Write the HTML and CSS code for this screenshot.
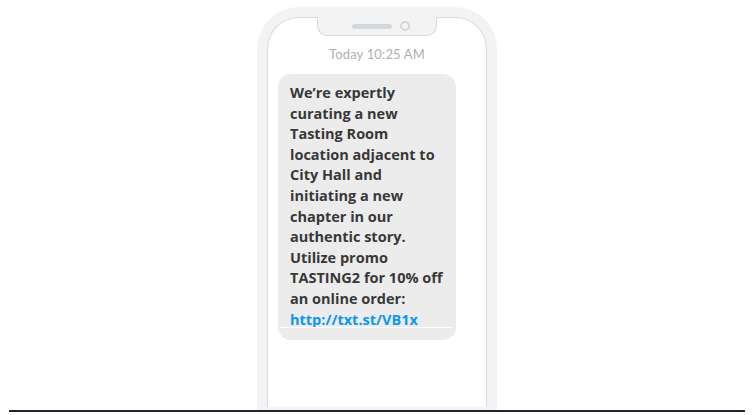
FILE: index.html
```html
<!DOCTYPE html>
<html>
<head>
<meta charset="utf-8">
<link rel="stylesheet" href="styles.css">
</head>
<body>
<div class="stage">
  <div class="phone">
    <div class="screen">
      <div class="notch">
        <span class="speaker"></span>
        <span class="camera"></span>
      </div>
      <div class="time">Today 10:25 AM</div>
      <div class="bubble">
        We’re expertly curating a new Tasting Room location adjacent to City Hall and initiating a new chapter in our authentic story. Utilize promo TASTING2 for 10% off an online order: <a class="link" href="#">http://txt.st/VB1x</a>
      </div>
    </div>
  </div>
</div>
<div class="rule"></div>
</body>
</html>
```
FILE: styles.css
```css
html, body { margin: 0; padding: 0; background: #fff; }
.stage {
  height: 403px;
  padding-top: 7px;
  padding-left: 257px;
  overflow: hidden;
}
.phone {
  width: 240px;
  height: 420px;
  box-sizing: border-box;
  background: #f3f3f3;
  border-radius: 42px 42px 0 0;
  padding: 10px 10px 0 10px;
}
.screen {
  position: relative;
  height: 390px;
  background: #fff;
  border: 1px solid #d3dce0;
  border-bottom: none;
  border-radius: 32px 32px 0 0;
  box-sizing: border-box;
  display: flex;
  flex-direction: column;
  align-items: center;
}
.notch {
  position: absolute;
  top: -1px;
  left: 49px;
  width: 120px;
  height: 19px;
  box-sizing: border-box;
  background: #f3f3f3;
  border: 1px solid #d3dce0;
  border-top: none;
  border-radius: 0 0 10px 10px;
  display: flex;
  align-items: center;
  justify-content: center;
  gap: 8px;
}
.speaker {
  width: 40px;
  height: 5px;
  border-radius: 3px;
  background: #d2d9dd;
  margin-left: 8px;
}
.camera {
  width: 6px;
  height: 6px;
  border-radius: 50%;
  border: 2px solid #d2d9dd;
}
.time {
  margin-top: 28px;
  font-family: Lato, "Liberation Sans", sans-serif;
  font-size: 13px;
  color: #acb0b5;
  letter-spacing: 0.15px;
}
.bubble {
  position: relative;
  align-self: flex-start;
  margin-left: 10px;
  margin-top: 12px;
  width: 178px;
  box-sizing: border-box;
  background: #ececec;
  border-radius: 13px;
  padding: 9px 12px 10px 12px;
  font-family: "Open Sans", sans-serif;
  font-weight: 700;
  font-size: 14.5px;
  line-height: 20.6px;
  color: #383838;
}
.bubble::after {
  content: "";
  position: absolute;
  left: 1px;
  right: 3px;
  bottom: 12px;
  height: 1px;
  background: #fff;
}
.link {
  color: #0f96f2;
  text-decoration: none;
}
.rule {
  height: 2px;
  margin: 0 11px 0 9px;
  background: #1f2535;
}
```
